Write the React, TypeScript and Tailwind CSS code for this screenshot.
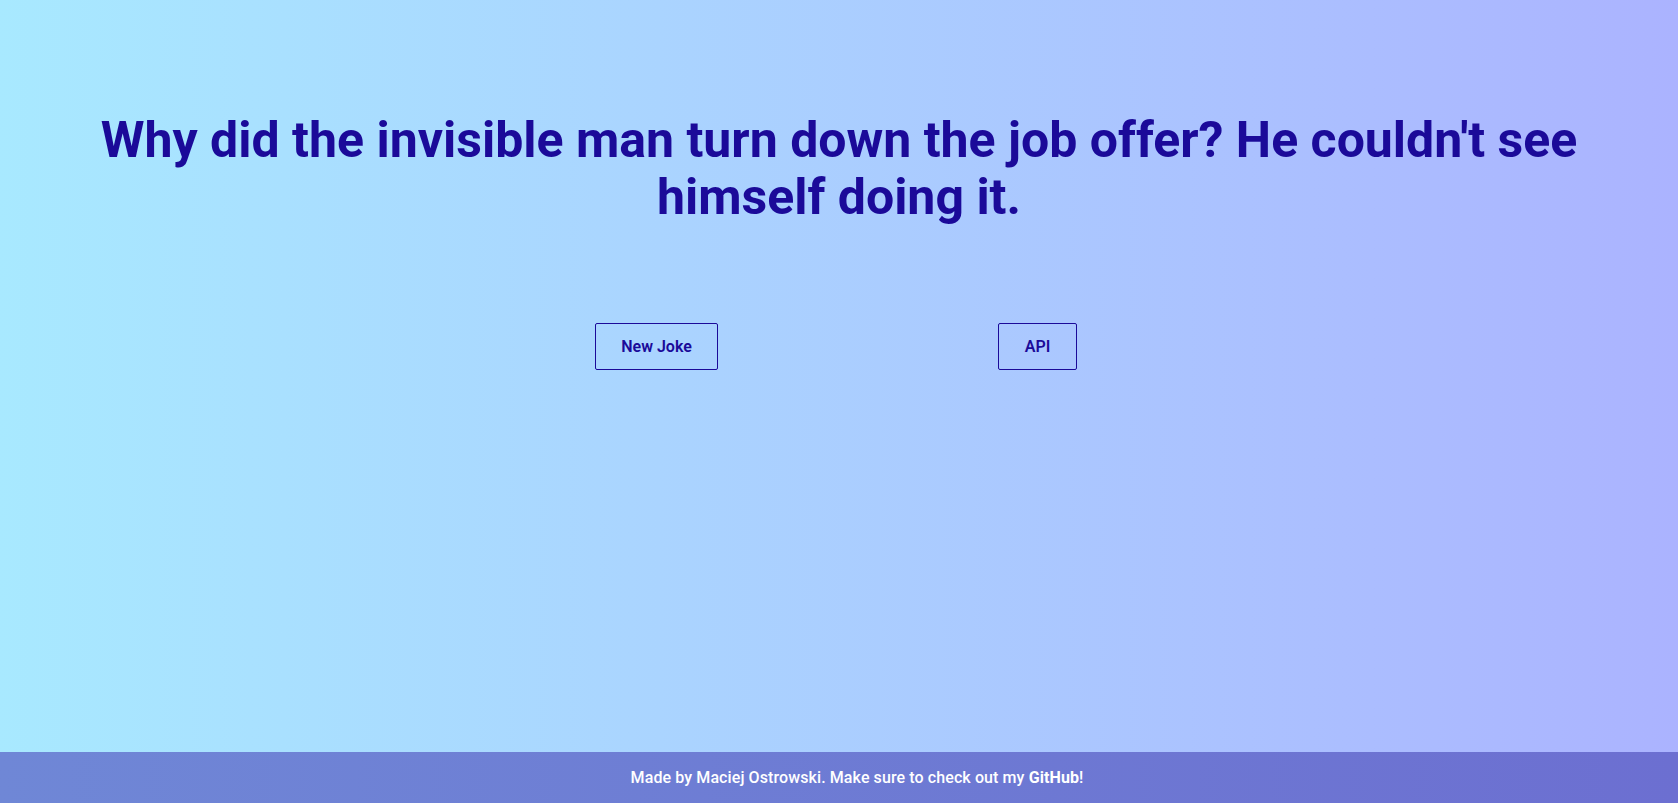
export default function App() {
  return (
    <div
      className="flex min-h-[803px] flex-col bg-gradient-to-r from-[#a8e9ff] to-[#abb3ff]"
      style={{ fontFamily: "Roboto, 'Liberation Sans', sans-serif" }}
    >
      <main className="flex flex-1 flex-col">
        <h1 className="mt-[112px] px-[80px] text-center text-[50px] font-bold leading-[57px] text-[#1b0a99]">
          Why did the invisible man turn down the job offer? He couldn't see himself doing it.
        </h1>
        <div className="mt-[97px] flex justify-center gap-[280px] pr-[6px]">
          <button className="h-[47px] w-[123px] rounded-[2px] border border-[#1b0a99] text-[16px] font-semibold text-[#1b0a99]">
            New Joke
          </button>
          <button className="h-[47px] w-[79px] rounded-[2px] border border-[#1b0a99] text-[16px] font-semibold text-[#1b0a99]">
            API
          </button>
        </div>
      </main>
      <footer className="flex h-[51px] items-center justify-center bg-gradient-to-r from-[#6f87d6] to-[#6c6fd1] pl-[36px] text-[16px] font-medium tracking-[0.1px] text-white">
        <p>
          Made by Maciej Ostrowski. Make sure to check out my <span className="font-bold">GitHub</span>!
        </p>
      </footer>
    </div>
  );
}
